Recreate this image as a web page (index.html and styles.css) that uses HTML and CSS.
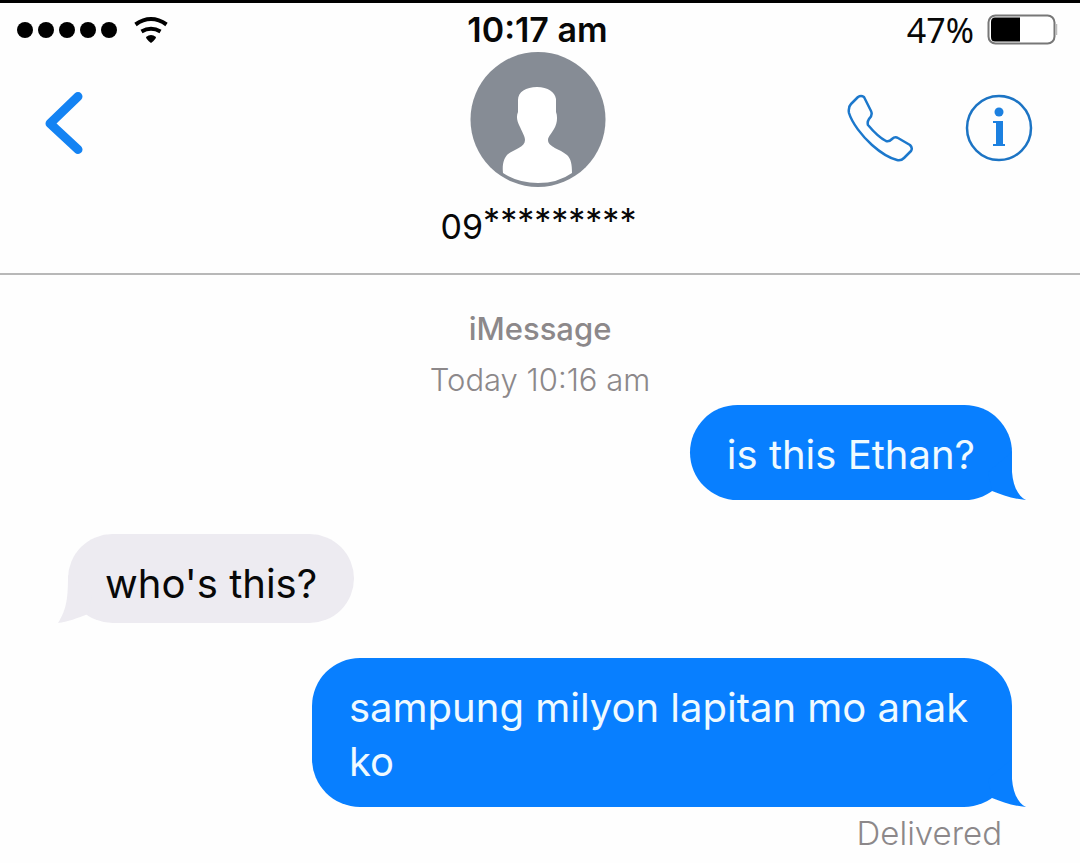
FILE: index.html
```
<!DOCTYPE html>
<html lang="tl">
  <head>
    <meta charset="utf-8">
    <meta content="width=device-width, initial-scale=1.0" name="viewport">
    <link rel="stylesheet" href="styles.css">
    <title>Messages</title>
  </head>
  <body>
    <div class="status">
      <div class="signal">
        <span class="dots"><i></i><i></i><i></i><i></i><i></i></span>
        <svg class="wifi" viewBox="0 0 36 28" aria-hidden="true">
          <path d="M2.500 8.500Q18 -2.500 33.500 8.500M8.500 15.500Q18 10 27.500 15.500" fill="none" stroke="#000" stroke-width="4"/>
          <path d="M13 21Q18 17 23 21Q23 23 18 27Q13 23 13 21z"/>
        </svg>
      </div>
      <time class="clock">10:17 am</time>
      <div class="power">
        <span class="percent">47%</span>
        <svg class="battery" viewBox="0 0 72 32" aria-hidden="true">
          <rect x="2.500" y="1.500" width="66" height="28" rx="7" fill="#fff" stroke="#777" stroke-width="2"/>
          <path d="M34 3.500V27.500H9Q5 27.500 5 23V8Q5 3.500 9 3.500z"/>
          <path d="M70.500 10V21" fill="none" stroke="#bbb" stroke-width="1.500"/>
        </svg>
      </div>
    </div>

    <header class="contact">
      <button class="icon back" aria-label="Back">
        <svg width="40" height="64" viewBox="0 0 40 64">
          <path d="M34 4.500L6 31.500L34 57.500" fill="none" stroke="#1483f3" stroke-width="9" stroke-linecap="round" stroke-linejoin="round"/>
        </svg>
      </button>
      <div class="person">
        <svg class="avatar" viewBox="0 0 136 136" aria-hidden="true">
          <circle cx="68" cy="67.500" r="67.500" fill="#868c95"/>
          <path d="M67 35C78 35 85 40 86 47V60C88 65 87 72 84 77C81 82 78 85 78 88C78 95 90 97 97 103C101 107 102 112 102 121Q88 131 68 131Q48 131 33 121C32 112 34 106 38 102C45 97 55 95 55 88C55 84 52 80 50 75C47 69 46 65 48 60V48C48 40 56 35 67 35z" fill="#fff"/>
        </svg>
        <h1 class="number">09<span class="mask">*********</span></h1>
      </div>
      <div class="actions">
        <button class="icon" aria-label="Call">
          <svg width="68" height="68" viewBox="0 0 68 68">
            <path d="M18 3Q15 1 12 3L5 10Q2 13 3 19C6 29 16 42 26 51C35 59 43 64 51 66Q55 67 58 64L65 57Q67 54 64 51L52 44Q49 42 46 45Q43 48 40 47C34 44 27 37 22 31Q21 28 23 25Q27 21 25 17L18 3z" fill="none" stroke="#1c78cc" stroke-width="2.500" stroke-linejoin="round"/>
          </svg>
        </button>
        <button class="icon" aria-label="Info">
          <svg width="68" height="68" viewBox="0 0 68 68">
            <circle cx="34" cy="34" r="32" fill="none" stroke="#1c74c4" stroke-width="2.500"/>
            <circle cx="34" cy="18" r="4.500" fill="#1c80e0"/>
            <path d="M28 28H35M28 51H40" fill="none" stroke="#1c80e0" stroke-width="2"/>
            <rect x="31" y="27" width="7" height="24" fill="#1c80e0"/>
          </svg>
        </button>
      </div>
    </header>

    <main class="thread">
      <p class="stamp"><b>iMessage</b><br>Today 10:16 am</p>
      <div class="bubble sent">
        is this Ethan?
        <svg class="tail" viewBox="0 0 58 48"><path d="M44 0V20C45 34 50 44 58 48C45 47 34 43 24 39L20 20z"/></svg>
      </div>
      <div class="bubble received">
        who's this?
        <svg class="tail" viewBox="0 0 58 48"><path d="M44 0C44 22 45 34 54 48C45 47 34 43 24 39L20 20z"/></svg>
      </div>
      <div class="bubble sent">
        sampung milyon lapitan mo anak ko
        <svg class="tail" viewBox="0 0 58 48"><path d="M44 0V20C45 34 50 44 58 48C45 47 34 43 24 39L20 20z"/></svg>
      </div>
      <p class="receipt">Delivered</p>
    </main>
  </body>
</html>
```

FILE: styles.css
```
* { box-sizing: border-box; }
body {
  margin: 0;
  border-top: 3px solid #000;
  background: #fefefe;
  color: #080808;
  font-family: Inter, "Liberation Sans", sans-serif;
}

.status {
  display: grid;
  grid-template-columns: 1fr auto 1fr;
  align-items: center;
  height: 49px;
  padding: 5px 22px 0 17px;
}
.signal,
.power {
  display: flex;
  align-items: center;
}
.signal { gap: 16px; }
.dots {
  display: flex;
  gap: 5px;
}
.dots i {
  width: 16px;
  height: 16px;
  border-radius: 50%;
  background: #000;
}
.wifi {
  width: 36px;
  height: 28px;
}
.clock {
  font-size: 34px;
  font-weight: 600;
  line-height: 40px;
}
.power {
  justify-content: flex-end;
  gap: 12px;
}
.percent {
  font-family: "Noto Sans", sans-serif;
  font-size: 34px;
  line-height: 40px;
}
.battery {
  width: 72px;
  height: 34px;
}

.contact {
  display: grid;
  grid-template-columns: 1fr auto 1fr;
  align-items: start;
  height: 223px;
  padding: 0 47px 0 44px;
  border-bottom: 2px solid #b8b8b8;
}
.icon {
  padding: 0;
  border: 0;
  background: none;
  cursor: pointer;
}
.icon svg { display: block; }
.back {
  justify-self: start;
  margin-top: 40px;
}
.person { text-align: center; }
.avatar {
  display: block;
  width: 136px;
  height: 136px;
  margin: 0 auto;
}
.number {
  margin: 16px 0 0;
  font-size: 34px;
  font-weight: 400;
  line-height: 44px;
}
.mask {
  line-height: 1;
  vertical-align: 6px;
}
.actions {
  display: flex;
  justify-content: flex-end;
  gap: 51px;
  margin-top: 42px;
}

.thread {
  display: flex;
  flex-direction: column;
  align-items: flex-start;
  padding: 28px 68px 0;
}
.stamp,
.receipt {
  margin: 0;
  color: #8c888a;
}
.stamp {
  align-self: center;
  font-size: 31px;
  font-weight: 300;
  line-height: 51px;
  text-align: center;
}
.stamp b { font-weight: 500; }
.bubble {
  position: relative;
  max-width: 700px;
  padding: 23px 37px 18px;
  border-radius: 48px;
  font-size: 40px;
  line-height: 54px;
}
.sent {
  align-self: flex-end;
  background: #087fff;
  color: #effaff;
}
.received {
  margin: 34px 0 35px;
  padding-bottom: 12px;
  background: #edebf1;
}
.tail {
  position: absolute;
  right: -14px;
  bottom: 0;
  width: 58px;
  height: 48px;
  fill: #087fff;
}
.received .tail {
  right: auto;
  left: -14px;
  fill: #edebf1;
  transform: scaleX(-1);
}
.receipt {
  align-self: flex-end;
  padding: 6px 10px 0;
  font-size: 33px;
  font-weight: 300;
  line-height: 40px;
}
```
